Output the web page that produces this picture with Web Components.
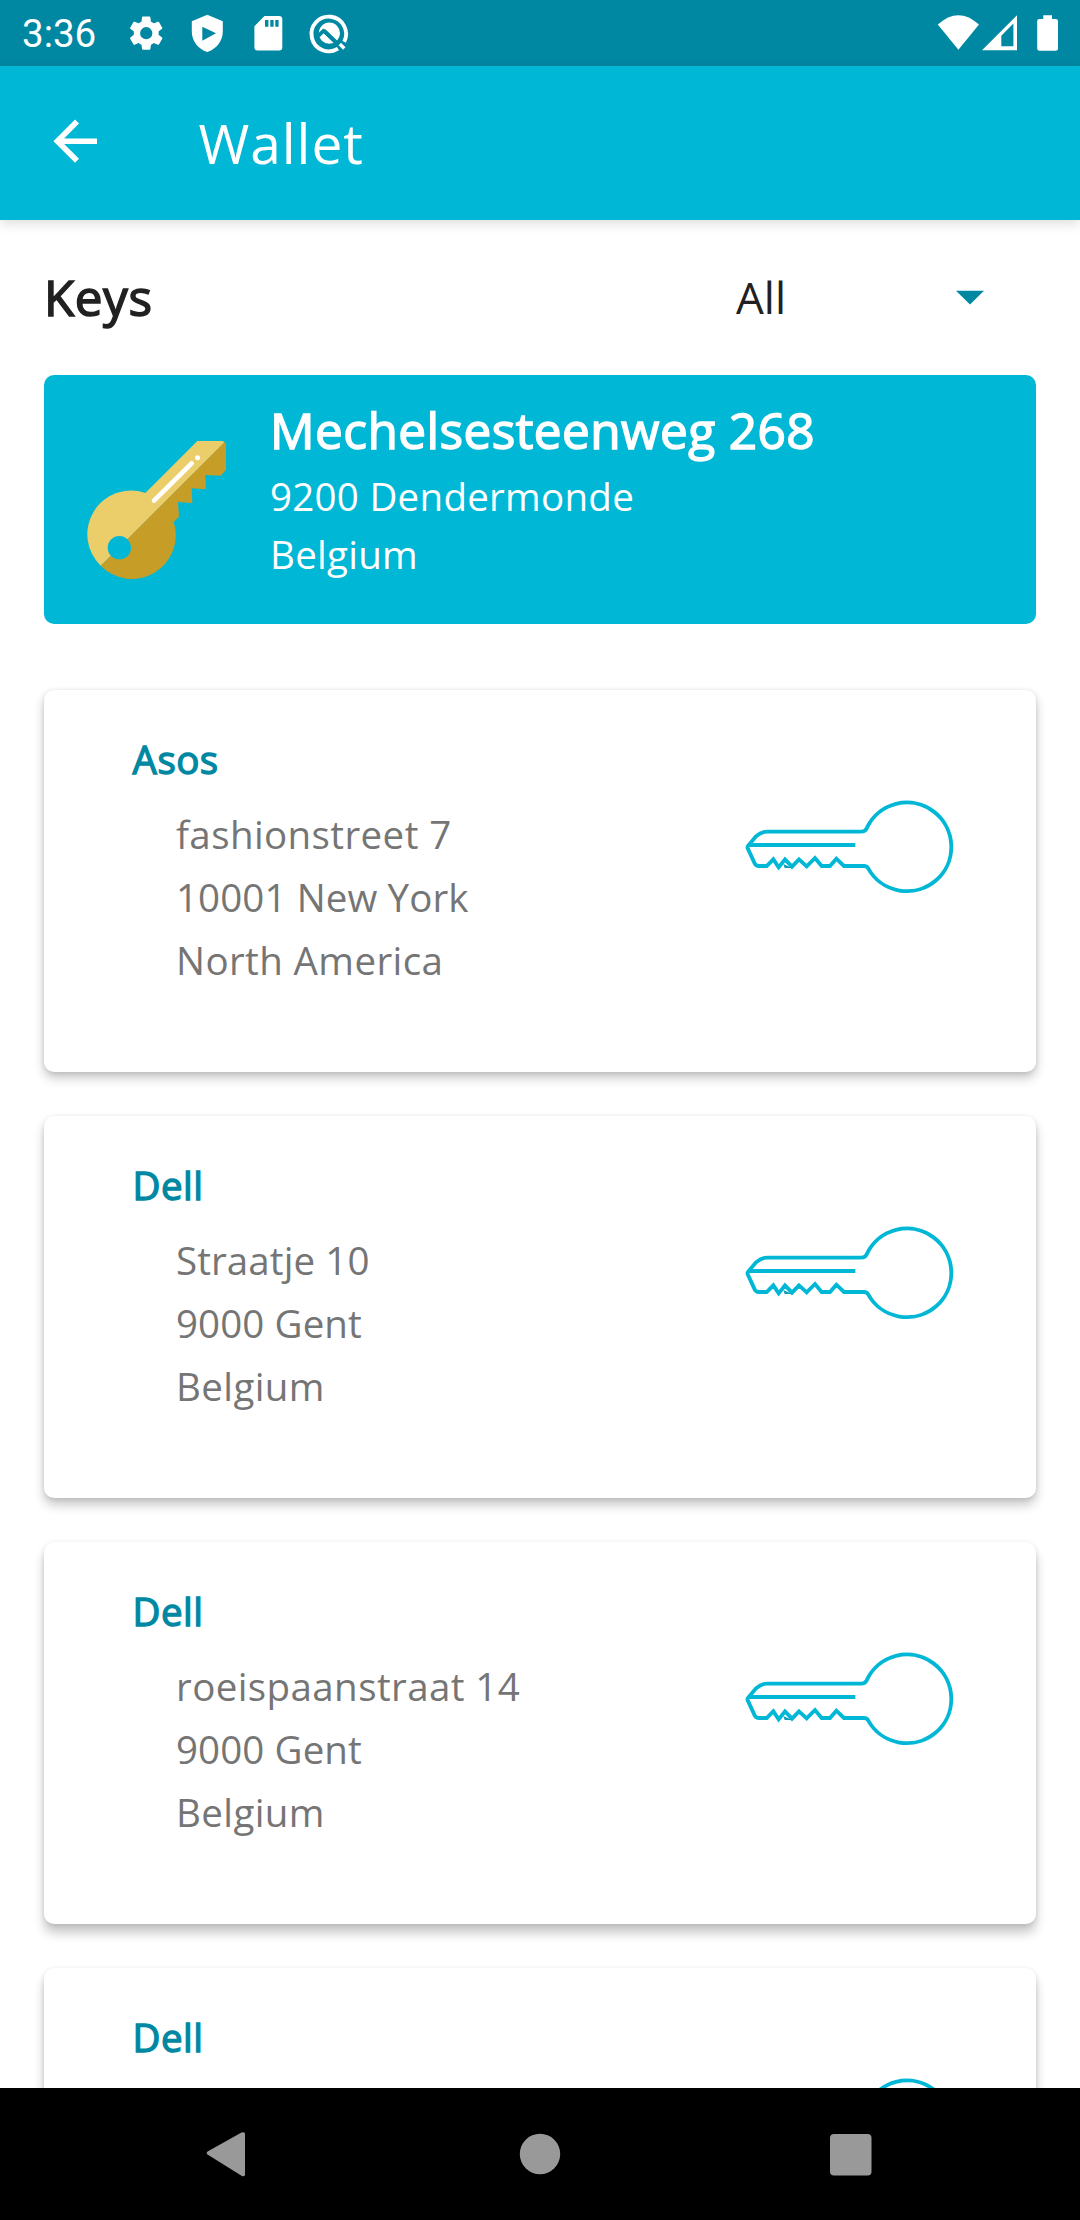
<!DOCTYPE html>
<html lang="en">
<head>
<meta charset="utf-8">
<title>Wallet</title>
<style>
html, body { margin: 0; height: 2220px; overflow: hidden; background: #fff; }
</style>
</head>
<body>
<wallet-app></wallet-app>

<script>
const define = (name, html) => {
  const template = document.createElement('template');
  template.innerHTML = html;
  customElements.define(name, class extends HTMLElement {
    constructor() {
      super();
      this.attachShadow({ mode: 'open' }).append(template.content.cloneNode(true));
    }
  });
};

define('status-bar', `
<style>
:host { display: flex; align-items: flex-start; height: 66px; background: #0088a3; color: #fff; font: 38.5px/68px Roboto, sans-serif; }
.time { width: 98px; padding-left: 22px; }
svg { display: block; }
.system { margin-left: auto; }
</style>
<span class="time">3:36</span>
<svg width="240" height="66" viewBox="120 0 240 66" fill="#fff">
  <g transform="translate(126.3 13.3) scale(1.66)"><path fill-rule="evenodd" d="M19.43 12.98c.04-.32.07-.64.07-.98s-.03-.66-.07-.98l2.11-1.65c.19-.15.24-.42.12-.64l-2-3.46c-.12-.22-.39-.3-.61-.22l-2.49 1c-.52-.4-1.08-.73-1.69-.98l-.38-2.65C14.46 2.18 14.25 2 14 2h-4c-.25 0-.46.18-.49.42l-.38 2.65c-.61.25-1.17.59-1.69.98l-2.490-1c-.23-.09-.49 0-.61.22l-2 3.46c-.13.22-.07.49.12.64l2.110 1.650c-.04.32-.07.65-.07.98s.03.66.07.98l-2.110 1.650c-.19.15-.24.42-.12.64l2 3.460c.12.22.39.3.61.22l2.490-1c.52.4 1.080.73 1.690.98l.38 2.650c.03.24.24.42.49.42h4c.25 0 .46-.18.49-.42l.38-2.650c.61-.25 1.170-.59 1.690-.98l2.490 1c.23.09.49 0 .61-.22l2-3.460c.12-.22.07-.49-.12-.64zM12 15.700a3.700 3.700 0 1 1 0-7.400 3.700 3.700 0 0 1 0 7.400z"/></g>
  <path fill-rule="evenodd" d="M207.3 14.7 222.8 21.2V31.5C222.8 41 216.5 49 207.3 52 198 49 191.8 41 191.8 31.5V21.2ZM202.3 26.7V40.7L216 33.3Z"/>
  <path fill-rule="evenodd" d="M264.5 16H279Q282.3 16 282.3 19.3V47.3Q282.3 50.6 279 50.6H257.7Q254.4 50.6 254.4 47.3V26.3ZM265 20V26.7H268.4V20ZM270.3 20V26.7H273.6V20ZM275.3 20V26.7H278.6V20Z"/>
  <path d="M338 48.6A17.3 17.3 0 1 1 344.2 41.8" fill="none" stroke="#fff" stroke-width="3.9"/>
  <circle cx="329.4" cy="33.2" r="10.6"/>
  <path d="M316.5 38 323.8 30.8 344 49.8" fill="none" stroke="#0088a3" stroke-width="3.2"/>
  <path d="M318.2 34.8 323.8 29.6" fill="none" stroke="#0088a3" stroke-width="2"/>
  <path d="M324 30.8 338.5 44.8" fill="none" stroke="#0088a3" stroke-width="4"/>
  <path d="M339.8 44 344.3 48.5" fill="none" stroke="#fff" stroke-width="3.4"/>
</svg>
<svg class="system" width="150" height="66" viewBox="930 0 150 66" fill="#fff">
  <path d="M958.4 49.8 937.8 24.6Q958.4 6 979 24.6Z"/>
  <path fill-rule="evenodd" d="M1017 15.3V50.2H982ZM1013.4 23.6 1001.3 35.8V46.3H1013.4Z"/>
  <path d="M1043.3 15.3H1052V19H1055.8Q1058 19 1058 21.2V48.6Q1058 50.8 1055.8 50.8H1039.4Q1037.2 50.8 1037.2 48.6V21.2Q1037.2 19 1039.4 19H1043.3Z"/>
</svg>`);

define('app-bar', `
<style>
:host { display: flex; align-items: center; height: 154px; background: #00b8d6; color: #fff; box-shadow: 0 3px 12px rgba(0,0,0,.15); font: 55px/76px "Open Sans", sans-serif; letter-spacing: .95px; }
svg { display: block; margin-left: 44px; margin-right: 88.5px; }
</style>
<svg width="66" height="66" viewBox="44 110 66 66" fill="none" stroke="#fff" stroke-width="5.6"><path d="M77 121.6 57.4 141.2 77 160.8M57.4 141.2H97"/></svg>
<slot></slot>`);

define('key-filter', `
<style>
:host { display: flex; align-items: center; justify-content: space-between; height: 155px; padding: 0 44px; color: #212121; font-family: "Open Sans", sans-serif; }
h2 { margin: 0; padding-bottom: 2px; font: 400 49.5px/68px "Open Sans", sans-serif; letter-spacing: .5px; -webkit-text-stroke: 1.5px currentColor; }
.select { display: flex; align-items: center; width: 300px; font-size: 44px; line-height: 60px; padding-bottom: 1px; }
svg { display: block; margin-left: auto; margin-right: 52px; }
</style>
<h2><slot></slot></h2>
<div class="select"><span><slot name="value"></slot></span><svg width="28" height="15" viewBox="0 0 28 15"><path d="M0 .8H28L14 14.5Z" fill="#0088a3"/></svg></div>`);

define('active-key', `
<style>
:host { display: flex; box-sizing: border-box; height: 249px; margin: 0 44px; border-radius: 10px; background: #00b8d6; color: #fff; font: 38.5px/58px "Open Sans", sans-serif; letter-spacing: .27px; }
svg { display: block; margin: 45px 20px 0 26px; flex: none; }
.text { padding-top: 19px; }
h3 { margin: 0; font: 400 49.5px/73px "Open Sans", sans-serif; letter-spacing: .45px; -webkit-text-stroke: 1.5px currentColor; }
</style>
<svg width="180" height="180" viewBox="0 0 540 540">
  <defs><mask id="hole"><rect width="540" height="540" fill="#fff"/><circle cx="148" cy="383" r="35" fill="#000"/></mask></defs>
  <g mask="url(#hole)">
    <path fill="#c59d27" d="M92 437 463 66 468 73V149L452 167 406 165 408 208 365 205 367 249 324 246 327 290 311 306A131 131 0 0 1 92 437Z"/>
    <path fill="#ebcd6a" d="M92 437A131 131 0 0 1 226 219L382 63H458L463 67Z"/>
  </g>
  <path d="M252 242 365 130" stroke="#fff" stroke-width="14" stroke-linecap="round"/>
  <circle cx="382.5" cy="113" r="7.5" fill="#fff"/>
</svg>
<div class="text"><h3><slot name="street"></slot></h3><slot></slot></div>`);

define('key-outline', `
<style>:host { display: block; } svg { display: block; }</style>
<svg width="260" height="130" viewBox="0 0 780 390" fill="none" stroke="#00b8d6" stroke-width="11.5" stroke-linejoin="miter">
  <path d="M406 195H90"/>
  <path d="M84 198 108 169Q124 155 142 155H424Q435 155 440 145A133 133 0 1 1 444.5 265Q440 258 432 258H372L349 236 330 258H305L285 234 260 259 237 238 216 260 195 238 176 262 160 238 140 258H117Q108 258 104 250L84 207Q81 202 84 198Z"/>
  <path d="M190 252 216 264H194Z" fill="#0a9db5" stroke="none"/>
</svg>`);

define('key-card', `
<style>
:host { display: flex; justify-content: space-between; box-sizing: border-box; flex: none; height: 382px; border-radius: 10px; background: #fff; color: #757575; box-shadow: 0 var(--lift, 6px) 11px rgba(0,0,0,.22), 0 1px 5px rgba(0,0,0,.1); font: 38.5px/63px "Open Sans", sans-serif; letter-spacing: .4px; }
.text { padding: 43px 0 0 88px; }
h4 { margin: 0 0 18px; padding-left: .6px; color: #0088a3; font: 400 38.5px/52px "Open Sans", sans-serif; letter-spacing: .45px; -webkit-text-stroke: 1.3px currentColor; }
.address { padding-left: 44px; }
key-outline { margin: 90px 56px 0 0; }
</style>
<div class="text"><h4><slot name="owner"></slot></h4><div class="address"><slot></slot></div></div>
<key-outline></key-outline>`);

define('key-list', `
<style>:host { display: flex; flex-direction: column; gap: 44px; flex: 1; min-height: 0; overflow: hidden; padding: 66px 44px 0; }</style>
<slot></slot>`);

define('nav-bar', `
<style>
:host { display: flex; flex: none; height: 132px; background: #000; }
svg { display: block; }
</style>
<svg width="1080" height="132" viewBox="0 2088 1080 132" fill="#999">
  <path d="M207.5 2154.4Q205.5 2152.8 208 2151.3L241.5 2132.6Q245 2131.3 245 2134V2174.5Q245 2177.4 241.5 2175.7Z"/>
  <circle cx="540" cy="2154" r="20.2"/>
  <rect x="830" y="2134" width="41.5" height="41.5" rx="4"/>
</svg>`);

define('wallet-app', `
<style>
:host { display: flex; flex-direction: column; width: 1080px; height: 2220px; background: #fff; overflow: hidden; }
status-bar, app-bar, key-filter, active-key { flex: none; }
p { margin: 0; white-space: nowrap; }
.tight { letter-spacing: .1px; }
key-card:nth-child(2) { --lift: 7px; }
key-card:nth-child(n+3) { --lift: 9px; }
</style>
<status-bar></status-bar>
<app-bar>Wallet</app-bar>
<key-filter>Keys<span slot="value">All</span></key-filter>
<active-key><span slot="street">Mechelsesteenweg 268</span><p>9200 Dendermonde</p><p>Belgium</p></active-key>
<key-list>
  <key-card><span slot="owner">Asos</span><p>fashionstreet 7</p><p class="tight">10001 New York</p><p>North America</p></key-card>
  <key-card><span slot="owner">Dell</span><p class="tight">Straatje 10</p><p class="tight">9000 Gent</p><p>Belgium</p></key-card>
  <key-card><span slot="owner">Dell</span><p>roeispaanstraat 14</p><p class="tight">9000 Gent</p><p>Belgium</p></key-card>
  <key-card><span slot="owner">Dell</span></key-card>
</key-list>
<nav-bar></nav-bar>`);
</script>
</body>
</html>
